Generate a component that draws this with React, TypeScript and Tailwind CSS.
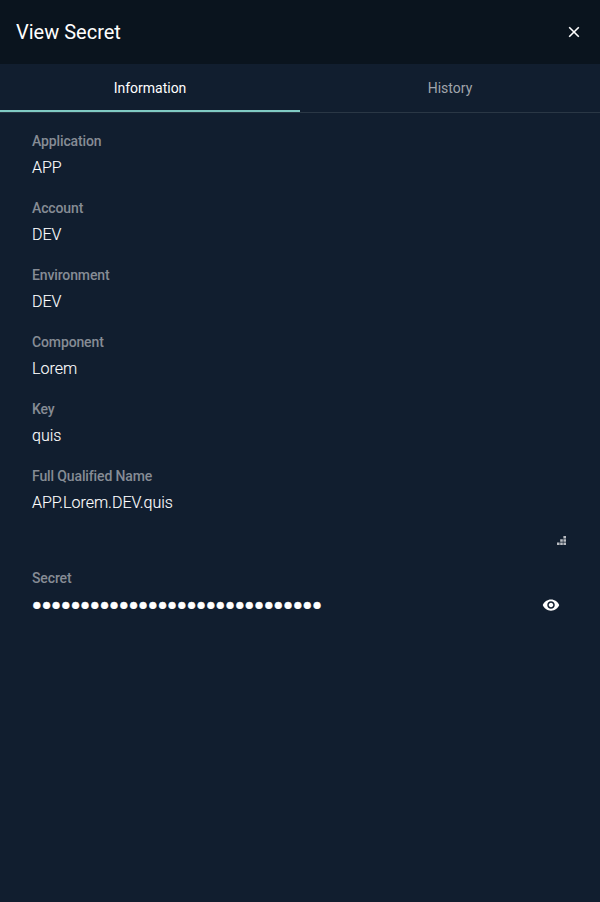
import { MdVisibility } from 'react-icons/md';

const fields = [
  ['Application', 'APP'],
  ['Account', 'DEV'],
  ['Environment', 'DEV'],
  ['Component', 'Lorem'],
  ['Key', 'quis'],
  ['Full Qualified Name', 'APP.Lorem.DEV.quis'],
];

function Label({ text }: { text: string }) {
  return <div className="text-sm leading-5 font-medium tracking-[-0.13px] text-[#868c95]">{text}</div>;
}

export default function App() {
  return (
    <div className="flex h-[902px] w-[600px] flex-col bg-[#111e2f] font-['Roboto',sans-serif] text-white">
      <header className="flex h-16 shrink-0 items-center justify-between bg-[#0a141e] px-4">
        <h1 className="text-xl font-normal">View Secret</h1>
        <button className="mr-px" aria-label="Close">
          <svg width="18" height="18" viewBox="0 0 18 18" fill="none" stroke="currentColor" strokeWidth="1.6">
            <path d="M4.2 4.2l9.6 9.6M13.8 4.2l-9.6 9.6" />
          </svg>
        </button>
      </header>
      <nav className="flex h-[49px] shrink-0 border-b border-[#2a3745] text-sm">
        <button className="h-12 w-1/2 border-b-2 border-[#80cbc4] pt-0.5 font-normal">Information</button>
        <button className="h-12 w-1/2 text-[#a0a5ac]">History</button>
      </nav>
      <main className="px-8 pt-[18px]">
        {fields.map(([label, value]) => (
          <section key={label} className="h-[67px]">
            <Label text={label} />
            <div className="mt-[5px] text-base leading-6 font-light [-webkit-text-stroke:0.1px_white]">{value}</div>
          </section>
        ))}
        <div className="flex h-[35px] justify-end pt-[3px] pr-0.5">
          <svg width="9" height="9" viewBox="0 0 9 9" fill="#b9bcc1">
            <path d="M6.4 0H9v2.6H6.4zM3.2 3.2h2.6v2.6H3.2zM6.4 3.2H9v2.6H6.4zM0 6.4h2.6V9H0zM3.2 6.4h2.6V9H3.2zM6.4 6.4H9V9H6.4z" />
          </svg>
        </div>
        <Label text="Secret" />
        <div className="mt-[5px] flex h-6 items-center justify-between pr-2">
          <span className="text-base leading-6 [-webkit-text-stroke:0.4px_white]">{'●'.repeat(30)}</span>
          <MdVisibility size={18} />
        </div>
      </main>
    </div>
  );
}
